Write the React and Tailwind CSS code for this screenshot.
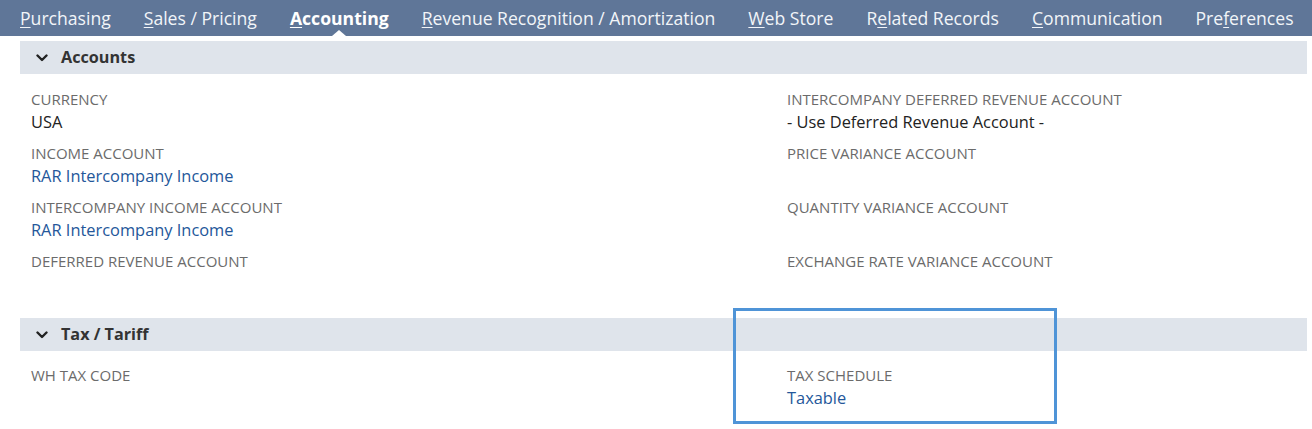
import React from 'react';

const tabs = [
  { pre: '', key: 'P', post: 'urchasing' },
  { pre: '', key: 'S', post: 'ales / Pricing' },
  { pre: '', key: 'A', post: 'ccounting', active: true },
  { pre: '', key: 'R', post: 'evenue Recognition / Amortization' },
  { pre: '', key: 'W', post: 'eb Store' },
  { pre: 'R', key: 'e', post: 'lated Records' },
  { pre: '', key: 'C', post: 'ommunication' },
  { pre: 'Pre', key: 'f', post: 'erences' },
];

const Chevron = () => (
  <svg width="12" height="8" viewBox="0 0 12 8" className="shrink-0">
    <path d="M1.5 1.5 L6 6 L10.5 1.5" fill="none" stroke="#222" strokeWidth="2.4" strokeLinecap="round" strokeLinejoin="round" />
  </svg>
);

function Field({ label, value, link }) {
  return (
    <div className="h-[54px]">
      <div className="text-[15px] leading-[20px] text-[#6b6b6b] uppercase">{label}</div>
      <div className={`mt-[2px] text-[16.4px] leading-[22px] ${link ? 'text-[#24579a]' : 'text-[#222]'}`}>{value || ''}</div>
    </div>
  );
}

function SectionHeader({ title }) {
  return (
    <div className="h-[33px] bg-[#dfe4eb] flex items-center pl-[16px] gap-[13px]">
      <Chevron />
      <span className="text-[16.2px] font-bold text-[#333]">{title}</span>
    </div>
  );
}

export default function App() {
  return (
    <div className="relative w-[1312px] h-[429px] bg-white overflow-hidden" style={{ fontFamily: '"Open Sans", "Noto Sans", sans-serif' }}>
      {/* tabs */}
      <div className="h-[36px] bg-[#5f7698] flex items-center pl-[20px] gap-[33px] whitespace-nowrap">
        {tabs.map((t, i) => (
          <div key={i} className={`relative text-[17.6px] leading-[36px] ${t.active ? 'font-bold text-white' : 'text-[#f2f5f9]'}`}>
            {t.pre}<u className="underline-offset-2">{t.key}</u>{t.post}
            {t.active && (
              <span className="absolute left-1/2 -translate-x-1/2 bottom-0 w-0 h-0 border-l-[7px] border-r-[7px] border-b-[6px] border-l-transparent border-r-transparent border-b-white" />
            )}
          </div>
        ))}
      </div>

      <div className="pl-[20px] pr-[5px] pt-[5px]">
        <SectionHeader title="Accounts" />
        <div className="grid grid-cols-[756px_1fr] pl-[11px] pt-[15px]">
          <div>
            <Field label="Currency" value="USA" />
            <Field label="Income Account" value="RAR Intercompany Income" link />
            <Field label="Intercompany Income Account" value="RAR Intercompany Income" link />
            <Field label="Deferred Revenue Account" />
          </div>
          <div>
            <Field label="Intercompany Deferred Revenue Account" value="- Use Deferred Revenue Account -" />
            <Field label="Price Variance Account" />
            <Field label="Quantity Variance Account" />
            <Field label="Exchange Rate Variance Account" />
          </div>
        </div>

        <div className="mt-[13px]">
          <SectionHeader title="Tax / Tariff" />
        </div>
        <div className="grid grid-cols-[756px_1fr] pl-[11px] pt-[14px]">
          <div>
            <Field label="WH Tax Code" />
          </div>
          <div>
            <Field label="Tax Schedule" value="Taxable" link />
          </div>
        </div>
      </div>

      {/* highlight annotation */}
      <div className="absolute left-[733px] top-[308px] w-[324px] h-[116px] border-[3px] border-[#4f94d7]" />
    </div>
  );
}
